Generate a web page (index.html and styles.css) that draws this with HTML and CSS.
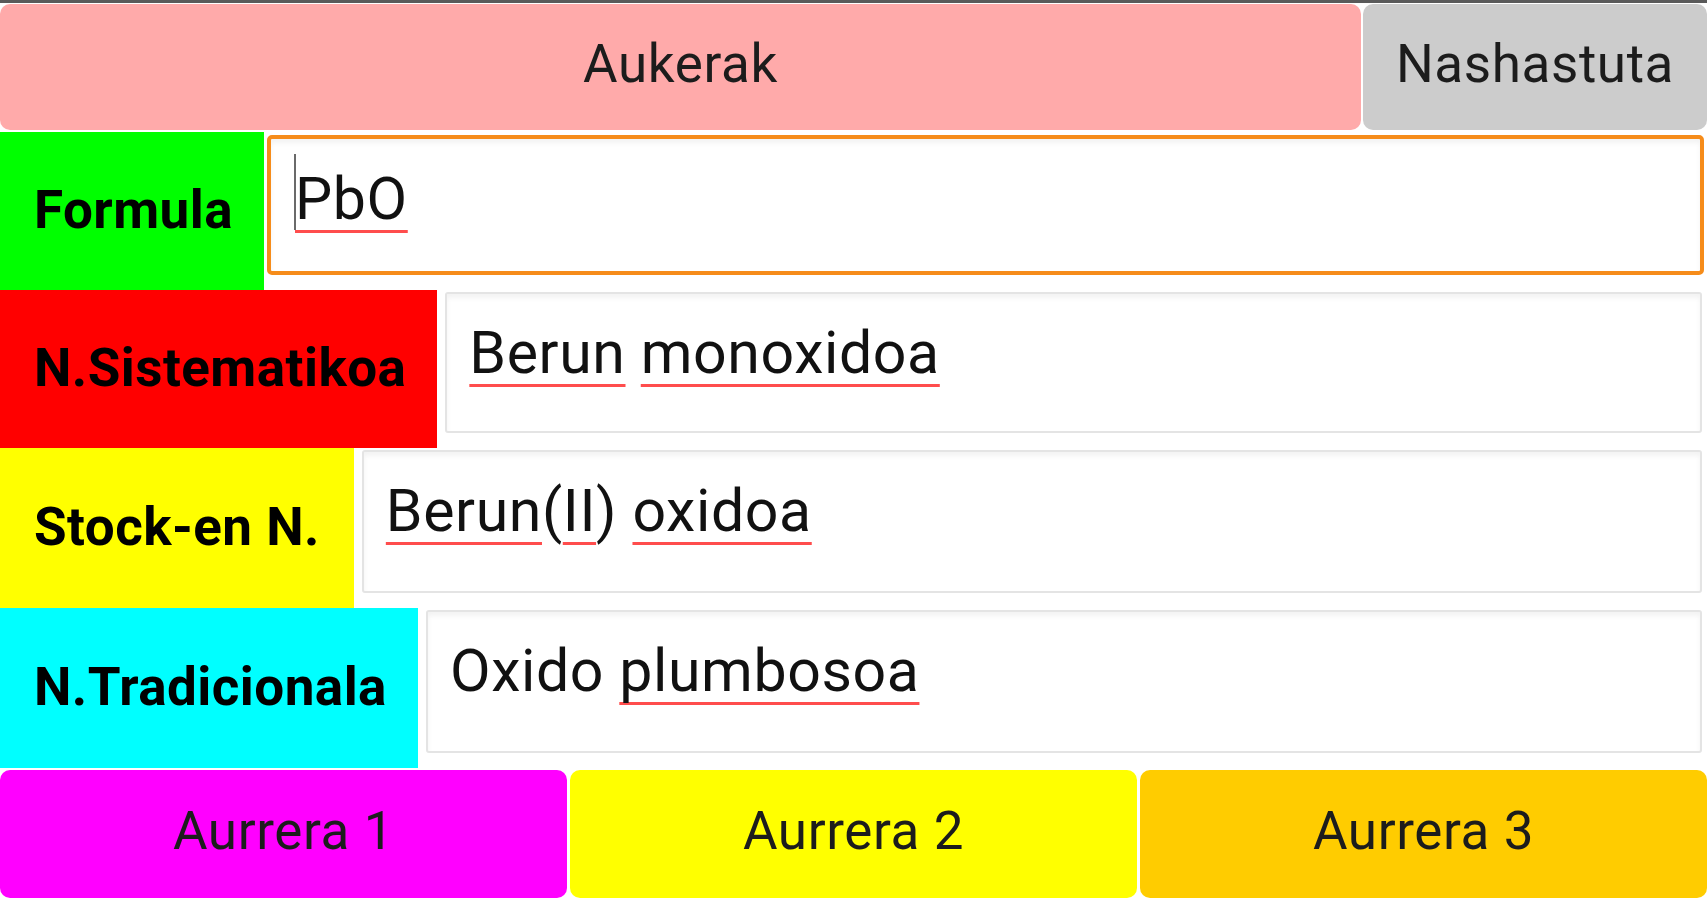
FILE: index.html
```html
<!DOCTYPE html>
<html lang="eu">
<head>
<meta charset="utf-8">
<title>Formulazioa</title>
<link rel="stylesheet" href="styles.css">
</head>
<body>
<div class="screen">
  <div class="topline"></div>
  <div class="toolbar">
    <div class="btn btn-options">Aukerak</div>
    <div class="btn btn-mixed">Nashastuta</div>
  </div>
  <div class="rows">
    <div class="row row-short">
      <div class="label label-green">Formula</div>
      <div class="field field-focused"><span class="text"><span class="cursor"></span><span class="typo">PbO</span></span></div>
    </div>
    <div class="row row-short">
      <div class="label label-red">N.Sistematikoa</div>
      <div class="field"><span class="text"><span class="typo">Berun</span> <span class="typo">monoxidoa</span></span></div>
    </div>
    <div class="row">
      <div class="label label-yellow">Stock-en N.</div>
      <div class="field"><span class="text"><span class="typo">Berun</span>(<span class="typo">II</span>) <span class="typo">oxidoa</span></span></div>
    </div>
    <div class="row">
      <div class="label label-cyan">N.Tradicionala</div>
      <div class="field"><span class="text">Oxido <span class="typo">plumbosoa</span></span></div>
    </div>
  </div>
  <div class="actions">
    <div class="btn btn-magenta">Aurrera 1</div>
    <div class="btn btn-yellow">Aurrera 2</div>
    <div class="btn btn-amber">Aurrera 3</div>
  </div>
</div>
</body>
</html>
```

FILE: styles.css
```css
html, body {
  margin: 0;
  padding: 0;
  background: #ffffff;
}

body {
  font-family: Roboto, "Noto Sans", "Liberation Sans", sans-serif;
  color: #1a1a1a;
}

.screen {
  width: 1707px;
  height: 900px;
  display: flex;
  flex-direction: column;
  overflow: hidden;
}

.topline {
  height: 3px;
  background: #5a5a5a;
}

.toolbar {
  display: flex;
  gap: 2px;
  margin-top: 1px;
  height: 126px;
}

.btn {
  display: flex;
  align-items: center;
  justify-content: center;
  box-sizing: border-box;
  padding-bottom: 6px;
  border-radius: 10px;
  font-size: 53px;
  letter-spacing: 0.6px;
  font-weight: 400;
  color: #1c1c1c;
}

.btn-options {
  flex: 1;
  background: #ffaaaa;
}

.btn-mixed {
  width: 344px;
  background: #cccccc;
}

.rows {
  margin-top: 2px;
  display: flex;
  flex-direction: column;
}

.row {
  display: flex;
  height: 160px;
}

.row-short {
  height: 158px;
}

.label {
  display: flex;
  align-items: center;
  padding: 0 31px 2px 34px;
  font-size: 53px;
  letter-spacing: 0.45px;
  font-weight: 700;
  color: #000000;
}

.label-green { background: #00ff00; }
.label-red { background: #ff0000; }
.label-yellow { background: #ffff00; padding-right: 34px; }
.label-cyan { background: #00ffff; }

.field {
  flex: 1;
  margin: 2px 5px 15px 8px;
  border: 2px solid #e4e4e4;
  border-radius: 3px;
  background: #ffffff;
  box-shadow: inset 0 4px 5px rgba(0, 0, 0, 0.05);
  padding: 25px 0 0 22px;
  font-size: 59px;
  letter-spacing: 0.6px;
  line-height: 68px;
  color: #111111;
}

.field-focused {
  margin: 3px 3px 15px 3px;
  border: 4px solid #f68c1a;
  border-radius: 5px;
  padding: 26px 0 0 24px;
}

.text {
  position: relative;
}

.typo {
  text-decoration: underline;
  text-decoration-color: #ff4d4d;
  text-decoration-thickness: 3px;
  text-underline-offset: 11px;
  text-decoration-skip-ink: none;
}

.cursor {
  position: absolute;
  left: -1px;
  top: -10px;
  width: 2px;
  height: 76px;
  background: #6a6a6a;
}

.actions {
  margin-top: 2px;
  display: flex;
  gap: 3px;
  height: 128px;
}

.actions .btn {
  flex: 1;
}

.btn-magenta { background: #ff00ff; }
.btn-yellow { background: #ffff00; }
.btn-amber { background: #ffcc00; }
```
